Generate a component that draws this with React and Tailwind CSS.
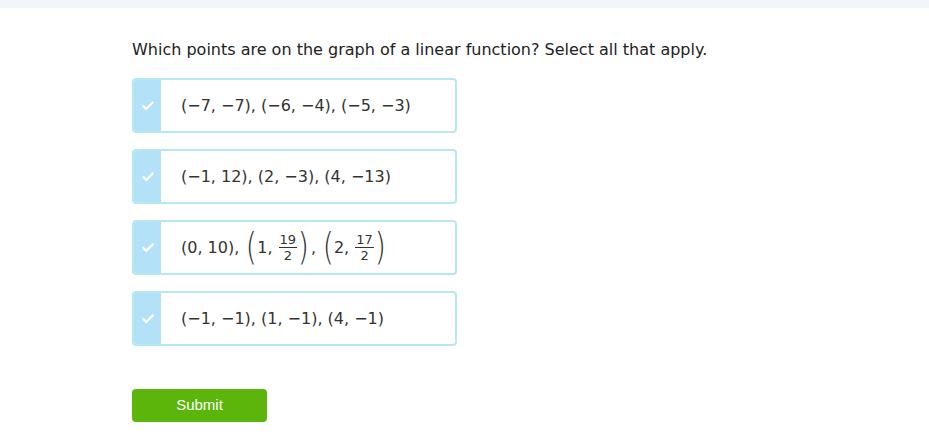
import { Check } from "lucide-react";

function Frac({ n, d }) {
  return (
    <span className="inline-flex flex-col items-center mx-[1px] text-[13px] leading-[15px]">
      <span className="border-b border-[#333] px-[1px]">{n}</span>
      <span>{d}</span>
    </span>
  );
}

function BigParen({ children }) {
  return (
    <span className="inline-flex items-center">
      <span className="text-[38px] font-extralight leading-none scale-x-[0.75] -mt-[4px] -mr-[2px]">(</span>
      <span className="inline-flex items-center">{children}</span>
      <span className="text-[38px] font-extralight leading-none scale-x-[0.75] -mt-[4px] -ml-[2px]">)</span>
    </span>
  );
}

function Choice({ children }) {
  return (
    <div className="flex w-[325px] h-[55px] border-2 border-[#b5e8ef] rounded-[4px] overflow-hidden">
      <div className="w-[27px] bg-[#b3e2f8] flex items-center justify-center">
        <Check size={14} strokeWidth={4} className="text-white" />
      </div>
      <div className="flex items-center pl-[20px] text-[16px] text-[#333]">{children}</div>
    </div>
  );
}

export default function App() {
  return (
    <div className="min-h-[448px] bg-white font-['DejaVu_Sans',sans-serif]">
      <div className="h-2 bg-[#f3f6f9]" />
      <div className="pl-[132px] pt-[32px]">
        <p className="text-[16px] text-[#222] leading-5">
          Which points are on the graph of a linear function? Select all that apply.
        </p>

        <div className="mt-[18px] flex flex-col gap-[16px]">
          <Choice>(−7, −7), (−6, −4), (−5, −3)</Choice>
          <Choice>(−1, 12), (2, −3), (4, −13)</Choice>
          <Choice>
            <span className="flex items-center">
              (0, 10),&nbsp;
              <BigParen>
                1,&nbsp;<Frac n="19" d="2" />
              </BigParen>
              ,&nbsp;
              <BigParen>
                2,&nbsp;<Frac n="17" d="2" />
              </BigParen>
            </span>
          </Choice>
          <Choice>(−1, −1), (1, −1), (4, −1)</Choice>
        </div>

        <button className="mt-[43px] w-[135px] h-[33px] rounded-[4px] bg-[#5bb50a] text-white text-[15px] font-['Liberation_Sans',sans-serif]">
          Submit
        </button>
      </div>
    </div>
  );
}
